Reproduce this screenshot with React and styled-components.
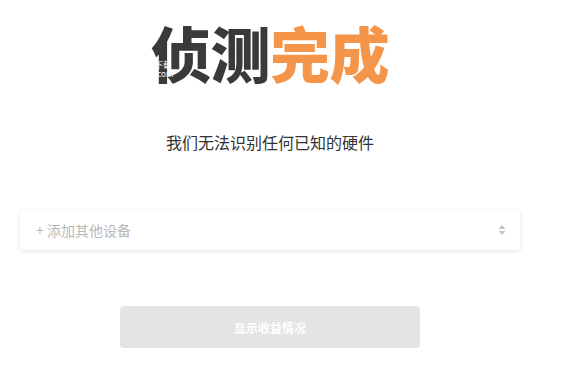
import styled, { createGlobalStyle } from 'styled-components';

const GlobalStyle = createGlobalStyle`
  body {
    margin: 0;
    background: #ffffff;
    font-family: "Noto Sans CJK SC", "Noto Sans", sans-serif;
  }
`;

const Page = styled.div`
  width: 540px;
  padding: 0 20px;
  box-sizing: border-box;
  display: flex;
  flex-direction: column;
  align-items: center;
`;

const Title = styled.h1`
  position: relative;
  margin: 18px 0 0;
  font-size: 60px;
  line-height: 68px;
  font-weight: 900;
  color: #3a3a3a;
  letter-spacing: -0.5px;
`;

const Accent = styled.span`
  color: #f5954a;
`;

const Watermark = styled.span`
  position: absolute;
  left: 4px;
  top: 42px;
  font-size: 8px;
  line-height: 9px;
  font-weight: 400;
  color: #ffffff;
  letter-spacing: 0;
  white-space: pre;
`;

const Subtitle = styled.p`
  margin: 44px 0 0;
  font-size: 16px;
  line-height: 24px;
  color: #333333;
`;

const SelectBox = styled.div`
  align-self: stretch;
  margin-top: 56px;
  height: 40px;
  padding: 0 16px;
  display: flex;
  align-items: center;
  justify-content: space-between;
  background: #ffffff;
  border-radius: 4px;
  box-shadow: 0 1px 4px rgba(0, 0, 0, 0.12);
`;

const Placeholder = styled.span`
  font-size: 14px;
  color: #b8b8b8;
`;

const SortIcon = styled.svg`
  width: 8px;
  height: 12px;
  margin-right: -2px;
`;

const ShowButton = styled.button`
  margin-top: 56px;
  width: 300px;
  height: 42px;
  border: none;
  border-radius: 4px;
  background: #e4e4e4;
  color: #ffffff;
  font-family: "Noto Sans CJK SC", sans-serif;
  font-size: 12px;
  font-weight: 700;
`;

export default function App() {
  return (
    <>
      <GlobalStyle />
      <Page>
        <Title>
          侦测<Accent>完成</Accent>
          <Watermark>{'下载\n.com'}</Watermark>
        </Title>
        <Subtitle>我们无法识别任何已知的硬件</Subtitle>
        <SelectBox>
          <Placeholder>+ 添加其他设备</Placeholder>
          <SortIcon viewBox="0 0 8 12">
            <path d="M4 1 L7.5 5 H0.5 Z M4 11 L7.5 7 H0.5 Z" fill="#c4c4c4" />
          </SortIcon>
        </SelectBox>
        <ShowButton>显示收益情况</ShowButton>
      </Page>
    </>
  );
}
